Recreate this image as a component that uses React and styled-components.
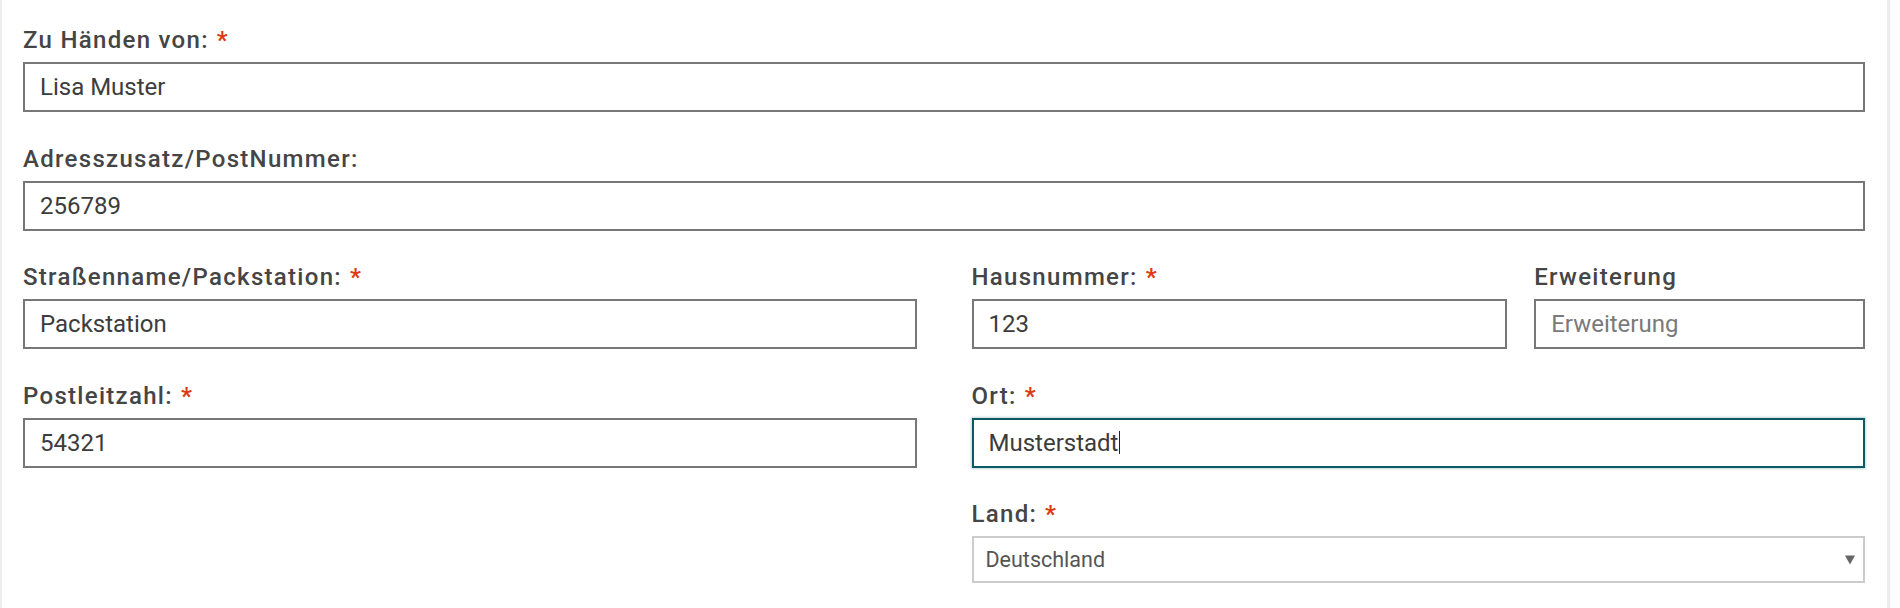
import React from "react";
import styled, { createGlobalStyle } from "styled-components";

const Global = createGlobalStyle`
  html, body { margin: 0; padding: 0; background: #ffffff; }
  body { font-family: Roboto, "Noto Sans", "Liberation Sans", sans-serif; }
  * { box-sizing: border-box; }
`;

const Page = styled.div`
  display: flex;
  width: 1900px;
  height: 608px;
  overflow: hidden;
  background: #ffffff;
`;

const Panel = styled.div`
  flex: 1;
  border-left: 2px solid #eeeeee;
  border-right: 3px solid #ececec;
  padding: 24px 22px 0 21px;
`;

const Gutter = styled.div`
  width: 10px;
  background: #fdfdfd;
`;

const Form = styled.form`
  display: grid;
  grid-template-columns: 1fr 1fr;
  column-gap: 55px;
  row-gap: 30.5px;
`;

const Split = styled.div`
  display: grid;
  grid-template-columns: 536fr 331fr;
  column-gap: 27px;
`;

const Field = styled.div`
  display: flex;
  flex-direction: column;
  grid-column: ${(p) => (p.$full ? "1 / -1" : p.$col || "auto")};
`;

const Label = styled.label`
  font-size: 24px;
  line-height: 32px;
  font-weight: 500;
  letter-spacing: 1.3px;
  color: #454545;
  margin-bottom: 6px;
  white-space: nowrap;
`;

const Star = styled.span`
  color: #dd3b12;
  font-weight: 700;
  margin-left: 8px;
`;

const InputWrap = styled.div`
  position: relative;
`;

const Input = styled.input`
  display: block;
  width: 100%;
  height: 50px;
  padding: 0 15px;
  font-family: Roboto, "Noto Sans", "Liberation Sans", sans-serif;
  font-size: 24px;
  color: #3c3c3c;
  background: #ffffff;
  border: 2px solid ${(p) => (p.$focused ? "#0c5a66" : "#777777")};
  border-radius: 0;
  outline: none;
  caret-color: transparent;
  box-shadow: ${(p) => (p.$focused ? "0 0 2px 1px rgba(12, 90, 102, 0.25)" : "none")};
  &::placeholder {
    color: #7a7a7a;
  }
`;

const CaretLayer = styled.div`
  position: absolute;
  inset: 0;
  display: flex;
  align-items: center;
  padding: 0 17px;
  pointer-events: none;
  font-size: 24px;
  color: transparent;
  white-space: pre;
`;

const Caret = styled.span`
  display: inline-block;
  width: 1px;
  height: 23px;
  background: #222222;
  margin-left: 1px;
`;

const SelectWrap = styled.div`
  position: relative;
`;

const Select = styled.select`
  display: block;
  width: 100%;
  height: 47px;
  padding: 0 40px 0 12px;
  font-family: Roboto, "Noto Sans", "Liberation Sans", sans-serif;
  font-size: 21.5px;
  color: #555555;
  background: #ffffff;
  border: 2px solid #cccccc;
  border-radius: 0;
  appearance: none;
  -webkit-appearance: none;
  outline: none;
`;

const Arrow = styled.span`
  position: absolute;
  right: 10px;
  top: 50%;
  transform: translateY(-50%);
  width: 0;
  height: 0;
  border-left: 5px solid transparent;
  border-right: 5px solid transparent;
  border-top: 9px solid #666666;
  pointer-events: none;
`;

function TextField({ label, required, value, placeholder, full, focused }) {
  return (
    <Field $full={full}>
      <Label>
        {label}
        {required && <Star>*</Star>}
      </Label>
      <InputWrap>
        <Input
          type="text"
          defaultValue={value}
          placeholder={placeholder}
          $focused={focused}
        />
        {focused && (
          <CaretLayer>
            {value}
            <Caret />
          </CaretLayer>
        )}
      </InputWrap>
    </Field>
  );
}

export default function App() {
  return (
    <>
      <Global />
      <Page>
        <Panel>
          <Form onSubmit={(e) => e.preventDefault()}>
            <TextField full label="Zu Händen von:" required value="Lisa Muster" />
            <TextField full label="Adresszusatz/PostNummer:" value="256789" />
            <TextField label="Straßenname/Packstation:" required value="Packstation" />
            <Split>
              <TextField label="Hausnummer:" required value="123" />
              <TextField label="Erweiterung" placeholder="Erweiterung" />
            </Split>
            <TextField label="Postleitzahl:" required value="54321" />
            <TextField label="Ort:" required value="Musterstadt" focused />
            <Field $col="2 / 3">
              <Label>
                Land:<Star>*</Star>
              </Label>
              <SelectWrap>
                <Select defaultValue="DE">
                  <option value="DE">Deutschland</option>
                  <option value="AT">Österreich</option>
                  <option value="CH">Schweiz</option>
                </Select>
                <Arrow />
              </SelectWrap>
            </Field>
          </Form>
        </Panel>
        <Gutter />
      </Page>
    </>
  );
}
